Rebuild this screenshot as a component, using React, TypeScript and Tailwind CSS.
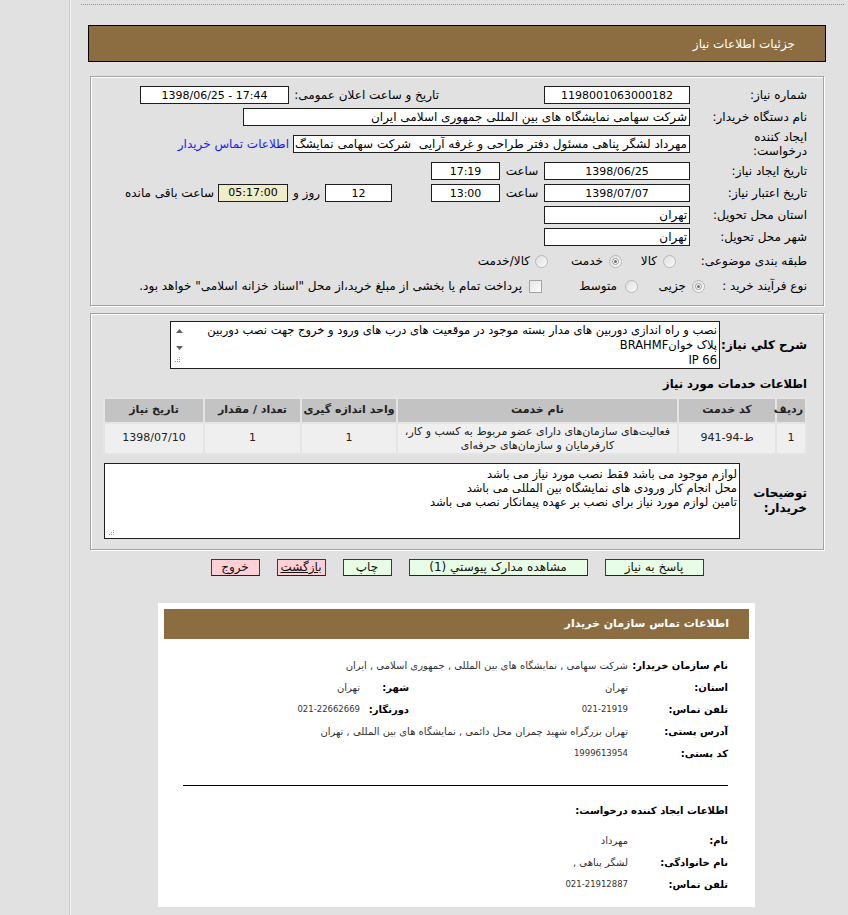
import React from 'react';

type P = { className?: string; children?: React.ReactNode };

function Field({ className = '', children }: P) {
  return (
    <div
      className={`h-[18px] border border-[#1e1e1e] bg-white flex items-center overflow-hidden whitespace-nowrap text-[12px] leading-none shrink-0 ${className}`}
    >
      {children}
    </div>
  );
}

function Num({ children }: P) {
  return (
    <span dir="ltr" className="text-[11px]">
      {children}
    </span>
  );
}

function Label({ className = '', children }: P) {
  return <div className={`shrink-0 text-[12px] leading-[14px] text-black whitespace-nowrap ${className}`}>{children}</div>;
}

function Radio({ checked = false }: { checked?: boolean }) {
  return (
    <span className="w-[13px] h-[13px] rounded-full border border-[#b9b9b9] bg-gradient-to-br from-[#dedede] to-[#fbfbfb] flex items-center justify-center shrink-0">
      {checked && (
        <span className="w-[7px] h-[7px] rounded-full border border-[#9a9a9a] bg-white flex items-center justify-center">
          <span className="w-[3px] h-[3px] rounded-full bg-[#6f6f6f]" />
        </span>
      )}
    </span>
  );
}

function Grip() {
  return (
    <svg width="7" height="7" viewBox="0 0 7 7" className="block">
      <rect x="5" y="1" width="1" height="1" fill="#9a9a9a" />
      <rect x="3" y="3" width="1" height="1" fill="#9a9a9a" />
      <rect x="5" y="3" width="1" height="1" fill="#9a9a9a" />
      <rect x="1" y="5" width="1" height="1" fill="#9a9a9a" />
      <rect x="3" y="5" width="1" height="1" fill="#9a9a9a" />
      <rect x="5" y="5" width="1" height="1" fill="#9a9a9a" />
    </svg>
  );
}

function Btn({ className = '', children }: P) {
  return (
    <div
      className={`h-[17px] border border-[#3a3a3a] border-b-[#222] flex items-end justify-center text-[12px] leading-[15px] text-[#111] shrink-0 whitespace-nowrap ${className}`}
    >
      {children}
    </div>
  );
}

function CardRow({
  label,
  value,
  label2,
  value2,
  num = false,
}: {
  label: string;
  value: string;
  label2?: string;
  value2?: string;
  num?: boolean;
}) {
  return (
    <div className="flex items-center h-[22px]">
      <div className="w-[100px] shrink-0 font-bold text-[10px] text-black whitespace-nowrap">{label}</div>
      <div
        className={`${label2 ? 'w-[219px]' : ''} ${num ? 'text-[8.5px]' : 'text-[10px]'} shrink-0 text-[#333] whitespace-nowrap`}
      >
        {value}
      </div>
      {label2 && <div className="w-[49px] shrink-0 font-bold text-[10px] text-black whitespace-nowrap">{label2}</div>}
      {value2 && <div className={`${num ? 'text-[8.5px]' : 'text-[10px]'} shrink-0 text-[#333] whitespace-nowrap`}>{value2}</div>}
    </div>
  );
}

export default function App() {
  return (
    <div className="w-[848px] h-[915px] overflow-hidden bg-[#e1e1e1] flex font-['DejaVu_Sans','Noto_Sans',sans-serif] text-black">
      <div className="w-[70px] h-full shrink-0 border-r border-[#cbcbcb]" />
      <div className="w-[777px] h-full shrink-0 border-l border-[#f2f2f2]">
        {/* dotted top line */}
        <div className="ml-[10px] mr-[3px] mt-[4px] border-t border-dotted border-[#8c8c8c]" />

        {/* brown title */}
        <div
          dir="rtl"
          className="mt-[20px] ml-[17px] w-[738px] h-[37px] border border-black bg-[#8c6d42] flex items-center pr-[30px] text-white text-[12px]"
        >
          جزئیات اطلاعات نیاز
        </div>

        {/* panel 1 */}
        <div
          dir="rtl"
          className="mt-[14px] ml-[19px] w-[734px] h-[230px] border border-[#a3a3a3] shadow-[inset_1px_1px_0_#ffffff,1px_1px_0_#ffffff] pt-[7px] pr-[16px]"
        >
          <div className="flex items-center h-[22px]">
            <Label className="w-[111px]">شماره نیاز:</Label>
            <Field className="mr-[6px] w-[146px] justify-center">
              <Num>1198001063000182</Num>
            </Field>
            <Label className="mr-[105px] w-[144px]">تاریخ و ساعت اعلان عمومی:</Label>
            <Field className="mr-[6px] w-[149px] justify-center">
              <Num>1398/06/25 - 17:44</Num>
            </Field>
          </div>
          <div className="flex items-center h-[22px]">
            <Label className="w-[111px]">نام دستگاه خریدار:</Label>
            <Field className="mr-[6px] w-[447px] pr-[2px]">شرکت سهامی نمایشگاه های بین المللی جمهوری اسلامی ایران</Field>
          </div>
          <div className="flex items-center h-[32px]">
            <Label className="w-[111px]">
              <div>ایجاد کننده</div>
              <div>درخواست:</div>
            </Label>
            <Field className="mr-[6px] w-[397px] pr-[2px]">
              مهرداد لشگر پناهی مسئول دفتر طراحی و غرفه آرایی&nbsp; شرکت سهامی نمایشگ
            </Field>
            <div className="mr-[4px] text-[12px] text-[#1a1aee] whitespace-nowrap">اطلاعات تماس خریدار</div>
          </div>
          <div className="flex items-center h-[22px]">
            <Label className="w-[111px]">تاریخ ایجاد نیاز:</Label>
            <Field className="mr-[6px] w-[146px] justify-center">
              <Num>1398/06/25</Num>
            </Field>
            <Label className="w-[44px] text-center">ساعت</Label>
            <Field className="w-[69px] justify-center">
              <Num>17:19</Num>
            </Field>
          </div>
          <div className="flex items-center h-[22px]">
            <Label className="w-[111px]">تاریخ اعتبار نیاز:</Label>
            <Field className="mr-[6px] w-[146px] justify-center">
              <Num>1398/07/07</Num>
            </Field>
            <Label className="w-[44px] text-center">ساعت</Label>
            <Field className="w-[69px] justify-center">
              <Num>13:00</Num>
            </Field>
            <Field className="mr-[39px] w-[67px] justify-center">
              <Num>12</Num>
            </Field>
            <Label className="w-[37px] text-center">روز و</Label>
            <div className="h-[18px] w-[70px] border border-[#1e1e1e] bg-[#efecca] flex items-center justify-center text-[11px] shrink-0">
              05:17:00
            </div>
            <Label className="mr-[4px]">ساعت باقی مانده</Label>
          </div>
          <div className="flex items-center h-[22px]">
            <Label className="w-[111px]">استان محل تحویل:</Label>
            <Field className="mr-[6px] w-[146px] pr-[2px]">تهران</Field>
          </div>
          <div className="flex items-center h-[22px]">
            <Label className="w-[111px]">شهر محل تحویل:</Label>
            <Field className="mr-[6px] w-[146px] pr-[2px]">تهران</Field>
          </div>
          <div className="flex items-center h-[26px]">
            <Label className="w-[111px]">طبقه بندی موضوعی:</Label>
            <div className="mr-[20px] w-[54px] flex items-center shrink-0">
              <Radio />
              <span className="mr-[6px] text-[12px]">کالا</span>
            </div>
            <div className="w-[74px] flex items-center shrink-0">
              <Radio checked />
              <span className="mr-[6px] text-[12px]">خدمت</span>
            </div>
            <div className="flex items-center shrink-0">
              <Radio />
              <span className="mr-[5px] text-[12px]">کالا/خدمت</span>
            </div>
          </div>
          <div className="flex items-center h-[24px]">
            <Label className="w-[102px]">نوع فرآیند خرید :</Label>
            <div className="w-[67px] flex items-center shrink-0">
              <Radio checked />
              <span className="mr-[6px] text-[12px]">جزیی</span>
            </div>
            <div className="w-[96px] flex items-center shrink-0">
              <Radio />
              <span className="mr-[8px] text-[12px]">متوسط</span>
            </div>
            <div className="flex items-center shrink-0">
              <span className="w-[13px] h-[13px] border border-[#a3a3a3] bg-gradient-to-br from-[#e6e6e6] to-[#fcfcfc] shrink-0" />
              <span className="mr-[7px] text-[12px] whitespace-nowrap">
                پرداخت تمام یا بخشی از مبلغ خرید،از محل "اسناد خزانه اسلامی" خواهد بود.
              </span>
            </div>
          </div>
        </div>

        {/* panel 2 */}
        <div
          dir="rtl"
          className="mt-[7px] ml-[19px] w-[734px] h-[237px] border border-[#a3a3a3] shadow-[inset_1px_1px_0_#ffffff,1px_1px_0_#ffffff] pt-[7px] pr-[16px]"
        >
          <div className="flex items-center h-[48px]">
            <div className="w-[87px] shrink-0 font-bold text-[12px] whitespace-nowrap">شرح کلي نیاز:</div>
            <div className="w-[550px] h-[48px] border border-[#1e1e1e] bg-white flex shrink-0">
              <div className="flex-1 overflow-hidden pr-[2px] pt-[1px] text-[11.5px] leading-[15px]">
                <div className="whitespace-nowrap overflow-hidden">
                  نصب و راه اندازی دوربین های مدار بسته موجود در موقعیت های درب های ورود و خروج جهت نصب دوربین
                </div>
                <div className="whitespace-nowrap">پلاک خوانBRAHMF</div>
                <div className="whitespace-nowrap">IP 66</div>
              </div>
              <div className="w-[16px] shrink-0 flex flex-col items-center pt-[7px]">
                <svg width="7" height="4" viewBox="0 0 7 4" className="block">
                  <path d="M0 4 L3.5 0 L7 4 Z" fill="#606060" />
                </svg>
                <svg width="7" height="4" viewBox="0 0 7 4" className="block mt-[13px]">
                  <path d="M0 0 L3.5 4 L7 0 Z" fill="#606060" />
                </svg>
                <div className="mt-[6px] mr-[4px]">
                  <Grip />
                </div>
              </div>
            </div>
          </div>

          <div className="mt-[7px] h-[16px] leading-[16px] font-bold text-[11.5px] whitespace-nowrap">اطلاعات خدمات مورد نیاز</div>

          <table className="mt-[5px] w-[702px] border-collapse table-fixed text-[11px]">
            <colgroup>
              <col className="w-[30px]" />
              <col className="w-[98px]" />
              <col className="w-[281px]" />
              <col className="w-[96px]" />
              <col className="w-[97px]" />
              <col className="w-[100px]" />
            </colgroup>
            <thead>
              <tr className="h-[25px] bg-[#c3c3c3] font-bold text-[#222]">
                <th className="border-2 border-[#e4e4e4] font-bold text-right pr-[2px]">ردیف</th>
                <th className="border-2 border-[#e4e4e4] font-bold">کد خدمت</th>
                <th className="border-2 border-[#e4e4e4] font-bold">نام خدمت</th>
                <th className="border-2 border-[#e4e4e4] font-bold">واحد اندازه گیری</th>
                <th className="border-2 border-[#e4e4e4] font-bold">تعداد / مقدار</th>
                <th className="border-2 border-[#e4e4e4] font-bold">تاریخ نیاز</th>
              </tr>
            </thead>
            <tbody>
              <tr className="h-[31px] bg-[#efefef] text-[#222]">
                <td className="border-2 border-[#e4e4e4] text-center">1</td>
                <td className="border-2 border-[#e4e4e4] text-center">
                  <span dir="ltr" className="inline-flex">
                    <span>941-94-</span>
                    <span>ط</span>
                  </span>
                </td>
                <td className="border-2 border-[#e4e4e4] text-center leading-[14px]">
                  <div>فعالیت‌های سازمان‌های دارای عضو مربوط به کسب و کار،</div>
                  <div>کارفرمایان و سازمان‌های حرفه‌ای</div>
                </td>
                <td className="border-2 border-[#e4e4e4] text-center">1</td>
                <td className="border-2 border-[#e4e4e4] text-center">1</td>
                <td className="border-2 border-[#e4e4e4] text-center">1398/07/10</td>
              </tr>
            </tbody>
          </table>

          <div className="mt-[8px] flex items-center h-[76px]">
            <div className="w-[67px] shrink-0 font-bold text-[12px] leading-[15px]">
              <div>توضیحات</div>
              <div>خریدار:</div>
            </div>
            <div className="w-[636px] h-[76px] border border-[#1e1e1e] bg-white flex shrink-0">
              <div className="flex-1 pr-[2px] pt-[3px] text-[11.5px] leading-[14px]">
                <div className="whitespace-nowrap">لوازم موجود می باشد فقط نصب مورد نیاز می باشد</div>
                <div className="whitespace-nowrap">محل انجام کار ورودی های نمایشگاه بین المللی می باشد</div>
                <div className="whitespace-nowrap">تامین لوازم مورد نیاز برای نصب بر عهده پیمانکار نصب می باشد</div>
              </div>
              <div className="w-[12px] shrink-0 flex flex-col justify-end items-center pb-[2px]">
                <Grip />
              </div>
            </div>
          </div>
        </div>

        {/* buttons */}
        <div dir="rtl" className="mt-[9px] ml-[17px] w-[738px] flex justify-center gap-[17px]">
          <Btn className="w-[99px] bg-[#e7fde5]">پاسخ به نیاز</Btn>
          <Btn className="w-[179px] bg-[#e7fde5]">مشاهده مدارک پیوستي (1)</Btn>
          <Btn className="w-[49px] bg-[#e7fde5]">چاپ</Btn>
          <Btn className="w-[49px] bg-[#fdd0d6] underline">بازگشت</Btn>
          <Btn className="w-[49px] bg-[#fdd0d6]">خروج</Btn>
        </div>

        {/* contact card */}
        <div dir="rtl" className="mt-[27px] ml-[87px] w-[597px] h-[304px] bg-white pt-[6px]">
          <div className="mx-[6px] h-[30px] bg-[#8c6d42] flex items-center pr-[20px] text-white font-bold text-[11px]">
            اطلاعات تماس سازمان خریدار
          </div>
          <div className="pr-[27px] mt-[15px]">
            <CardRow label="نام سازمان خریدار:" value="شرکت سهامی , نمایشگاه های بین المللی , جمهوری اسلامی , ایران" />
            <CardRow label="استان:" value="تهران" label2="شهر:" value2="تهران" />
            <CardRow label="تلفن تماس:" value="021-21919" label2="دورنگار:" value2="021-22662669" num />
            <CardRow label="آدرس پستی:" value="تهران بزرگراه شهید چمران محل دائمی , نمایشگاه های بین المللی , تهران" />
            <CardRow label="کد پستی:" value="1999613954" num />
            <div className="mt-[21px] w-[545px] border-t border-black" />
            <div className="mt-[13px] h-[22px] flex items-center font-bold text-[10px]">اطلاعات ایجاد کننده درخواست:</div>
            <div className="mt-[8px]">
              <CardRow label="نام:" value="مهرداد" />
              <CardRow label="نام خانوادگی:" value="لشگر پناهی ," />
              <CardRow label="تلفن تماس:" value="021-21912887" num />
            </div>
          </div>
        </div>
      </div>
    </div>
  );
}
